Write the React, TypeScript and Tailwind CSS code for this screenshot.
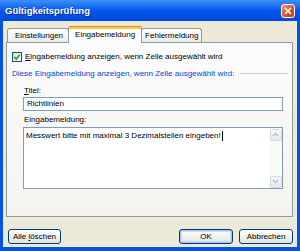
const Tab = ({ label, active, pad }: { label: string; active?: boolean; pad?: string }) =>
  active ? (
    <div className="relative z-10 -mx-[1px] -mb-[1px] flex h-[17px] flex-col rounded-t-[3px] border-x border-[#919b9c] bg-[#fcfcfe]">
      <div className="h-[1px] rounded-t-[3px] bg-[#e68b2c]" />
      <div className="h-[2px] bg-[#ffc73c]" />
      <div className="flex flex-1 items-center px-[6px] pb-[2px]">{label}</div>
    </div>
  ) : (
    <div
      className={`flex h-[14px] items-center rounded-t-[3px] border-x border-t border-[#919b9c] bg-gradient-to-b from-[#ffffff] to-[#ecebe6] ${pad}`}
    >
      {label}
    </div>
  );

const Button = ({ children, def, w }: { children: React.ReactNode; def?: boolean; w: string }) => (
  <div
    className={`flex h-[15px] items-center justify-center rounded-[3px] border border-[#003c74] bg-gradient-to-b from-[#ffffff] to-[#e3e2da] ${w} ${
      def ? 'shadow-[inset_0_0_0_1px_#a7c4f5,inset_0_0_0_2px_#ceddf8]' : ''
    }`}
  >
    <span>{children}</span>
  </div>
);

const Arrow = ({ up }: { up?: boolean }) => (
  <div className="flex h-[12px] w-[12px] items-center justify-center rounded-[2px] border border-[#d2dae6] bg-gradient-to-b from-[#f6f8fb] to-[#e4e9f0]">
    <svg width="7" height="5" viewBox="0 0 7 5">
      <path
        d={up ? 'M1 4 L3.5 1.5 L6 4' : 'M1 1 L3.5 3.5 L6 1'}
        fill="none"
        stroke="#b5bdc9"
        strokeWidth="1.3"
      />
    </svg>
  </div>
);

const App = () => (
  <div className="flex h-[251px] w-[300px] flex-col overflow-hidden bg-[#0553e3] font-['Liberation_Sans',Arial,sans-serif] text-[8px] leading-[10px] text-black">
    <div className="flex h-[21px] items-center bg-gradient-to-b from-[#3d8ff9] via-[#0058ee] to-[#0049dd] pl-[5px] pr-[5px]">
      <span className="flex-1 text-[9.5px] font-bold text-white [text-shadow:1px_1px_0_#0b2a8c]">
        Gültigkeitsprüfung
      </span>
      <div className="flex h-[14px] w-[14px] items-center justify-center rounded-[3px] border border-white bg-gradient-to-br from-[#f09a7a] via-[#e0532d] to-[#c9381a]">
        <svg width="8" height="8" viewBox="0 0 8 8">
          <path d="M1 1 L7 7 M7 1 L1 7" stroke="white" strokeWidth="1.6" />
        </svg>
      </div>
    </div>

    <div className="mx-[3px] mb-[4px] flex flex-1 flex-col bg-[#ece9d8] pl-[3px] pr-[4px]">
      <div className="mt-[5px] flex h-[16px] items-end pl-[1px]">
        <Tab label="Einstellungen" pad="pl-[7px] pr-[5px]" />
        <Tab label="Eingabemeldung" active />
        <Tab label="Fehlermeldung" pad="px-[3px]" />
      </div>

      <div className="flex h-[175px] flex-col border border-[#919b9c] bg-gradient-to-b from-[#fcfcfe] to-[#f4f3ee]">
        <div className="mt-[9px] flex h-[10px] items-center pl-[5px]">
          <div className="flex h-[10px] w-[10px] items-center justify-center border border-[#1c5180] bg-gradient-to-br from-[#dcdcd7] to-[#ffffff]">
            <svg width="8" height="8" viewBox="0 0 8 8">
              <path d="M1.2 4 L3.2 6 L6.8 1.8" fill="none" stroke="#21a121" strokeWidth="1.6" />
            </svg>
          </div>
          <span className="ml-[3px]">
            <u>E</u>ingabemeldung anzeigen, wenn Zelle ausgewählt wird
          </span>
        </div>

        <div className="mt-[7px] flex h-[10px] items-center pl-[5px]">
          <span className="text-[#0046d5]">Diese Eingabemeldung anzeigen, wenn Zelle ausgewählt wird:</span>
          <div className="ml-[6px] mr-[4px] h-[2px] flex-1 border-t border-b border-t-[#d0d0bf] border-b-white" />
        </div>

        <div className="mt-[7px] h-[10px] pl-[17px]">
          <u>T</u>itel:
        </div>
        <div className="ml-[16px] mt-[1px] flex h-[14px] w-[260px] items-center border border-[#7f9db9] bg-white pl-[3px]">
          Richtlinien
        </div>

        <div className="mt-[4px] h-[10px] pl-[17px]">
          Ein<u>g</u>abemeldung:
        </div>
        <div className="ml-[16px] mt-[2px] flex h-[62px] w-[260px] border border-[#7f9db9] bg-white">
          <div className="flex flex-1 items-start pl-[2px] pt-[3px]">
            <span>Messwert bitte mit maximal 3 Dezimalstellen eingeben!</span>
            <span className="ml-[1px] h-[10px] w-[1px] bg-black" />
          </div>
          <div className="flex w-[13px] flex-col justify-between bg-[#fafaf8] p-[0.5px]">
            <Arrow up />
            <Arrow />
          </div>
        </div>
      </div>

      <div className="mt-[12px] flex items-center justify-between pl-[2px]">
        <Button w="w-[53px]">
          Alle <u>l</u>öschen
        </Button>
        <div className="flex gap-[6px]">
          <Button w="w-[54px]" def>
            OK
          </Button>
          <Button w="w-[54px]">Abbrechen</Button>
        </div>
      </div>
    </div>
  </div>
);

export default App;
